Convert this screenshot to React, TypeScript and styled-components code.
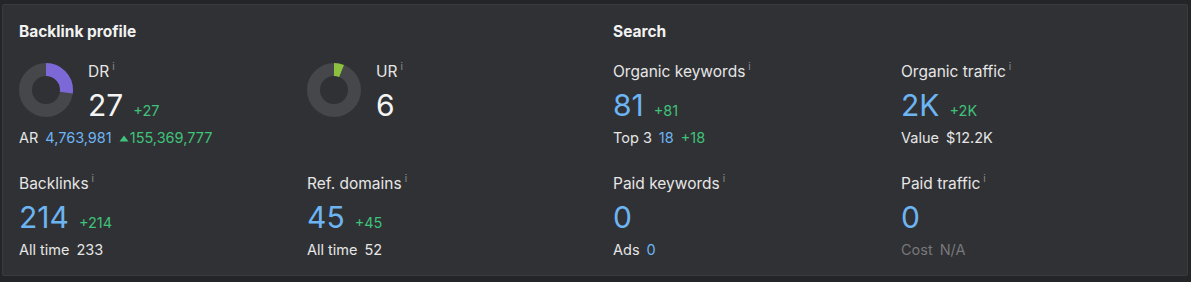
import styled, { createGlobalStyle } from "styled-components";

const Global = createGlobalStyle`
  html, body {
    margin: 0;
    background: #242528;
  }
  body {
    padding: 4px 3px 4px 2px;
    font-family: Inter, "Liberation Sans", sans-serif;
    color: #e6e6e6;
  }
`;

const Card = styled.div`
  display: flex;
  background: #303134;
  border: 1px solid #3a3b3e;
  border-radius: 2px;
  padding: 18px 0 17px;
  height: 272px;
  box-sizing: border-box;
`;

const Section = styled.div<{ $right?: boolean }>`
  flex: ${({ $right }) => ($right ? "1" : "0 0 591px")};
  padding-left: ${({ $right }) => ($right ? "18px" : "16px")};
  box-sizing: border-box;
`;

const Divider = styled.div`
  width: 1px;
  background: #46474a;
`;

const Title = styled.div`
  font-size: 15.5px;
  font-weight: 700;
  line-height: 18px;
  color: #f2f2f2;
`;

const Grid = styled.div`
  display: grid;
  grid-template-columns: 288px 288px;
  row-gap: 26px;
  margin-top: 21px;
`;

const Block = styled.div`
  display: flex;
  flex-direction: column;
`;

const GaugeRow = styled.div`
  display: flex;
  gap: 15px;
  align-items: flex-start;
`;

const GaugeBox = styled.svg`
  margin-top: 1px;
  flex: none;
`;

const Label = styled.div`
  font-size: 15.5px;
  line-height: 20px;
  color: #e6e6e6;
`;

const Info = styled.span`
  font-size: 10px;
  color: #8b8c8f;
  margin-left: 3px;
  position: relative;
  top: -7px;
`;

const ValueRow = styled.div`
  display: flex;
  align-items: baseline;
  gap: 10px;
  margin-top: 4px;
  height: 36px;
`;

const Value = styled.span<{ $white?: boolean }>`
  font-size: 30px;
  line-height: 36px;
  font-weight: 400;
  color: ${({ $white }) => ($white ? "#f4f4f4" : "#6db4f3")};
`;

const Delta = styled.span`
  font-size: 14.5px;
  color: #3fc27a;
`;

const Sub = styled.div`
  display: flex;
  align-items: center;
  gap: 7px;
  margin-top: 5px;
  font-size: 14.5px;
  line-height: 20px;
  color: #e6e6e6;
`;

const Blue = styled.span`
  color: #6db4f3;
`;

const Green = styled.span`
  color: #3fc27a;
  display: inline-flex;
  align-items: center;
`;

const Muted = styled.span`
  display: flex;
  gap: 7px;
  color: #77787b;
`;

type Metric = {
  label: string;
  value: string;
  delta?: string;
  gauge?: { pct: number; color: string };
  sub?: React.ReactNode;
};

function Gauge({ pct, color }: { pct: number; color: string }) {
  const r = 20.5;
  const c = 2 * Math.PI * r;
  return (
    <GaugeBox width="54" height="54" viewBox="0 0 54 54">
      <circle cx="27" cy="27" r={r} fill="none" stroke="#46474a" strokeWidth="13" />
      <circle
        cx="27"
        cy="27"
        r={r}
        fill="none"
        stroke={color}
        strokeWidth="13"
        strokeDasharray={`${(c * pct) / 100} ${c}`}
        transform="rotate(-90 27 27)"
      />
    </GaugeBox>
  );
}

function Up() {
  return (
    <svg width="10" height="7" viewBox="0 0 10 7" style={{ marginRight: 1 }}>
      <path d="M5 0.5 L9.5 6.5 L0.5 6.5 Z" fill="#3fc27a" />
    </svg>
  );
}

function MetricBlock({ m }: { m: Metric }) {
  const head = (
    <div>
      <Label>
        {m.label}
        <Info>i</Info>
      </Label>
      <ValueRow>
        <Value $white={!!m.gauge}>{m.value}</Value>
        {m.delta && <Delta>{m.delta}</Delta>}
      </ValueRow>
    </div>
  );
  return (
    <Block>
      {m.gauge ? (
        <GaugeRow>
          <Gauge pct={m.gauge.pct} color={m.gauge.color} />
          {head}
        </GaugeRow>
      ) : (
        head
      )}
      {m.sub && <Sub>{m.sub}</Sub>}
    </Block>
  );
}

const backlinks: Metric[] = [
  {
    label: "DR",
    value: "27",
    delta: "+27",
    gauge: { pct: 27, color: "#7d68d8" },
    sub: (
      <>
        AR <Blue>4,763,981</Blue>
        <Green>
          <Up />
          155,369,777
        </Green>
      </>
    ),
  },
  { label: "UR", value: "6", gauge: { pct: 6, color: "#8cc13f" } },
  {
    label: "Backlinks",
    value: "214",
    delta: "+214",
    sub: (
      <>
        All time <span>233</span>
      </>
    ),
  },
  {
    label: "Ref. domains",
    value: "45",
    delta: "+45",
    sub: (
      <>
        All time <span>52</span>
      </>
    ),
  },
];

const search: Metric[] = [
  {
    label: "Organic keywords",
    value: "81",
    delta: "+81",
    sub: (
      <>
        Top 3 <Blue>18</Blue>
        <Green>+18</Green>
      </>
    ),
  },
  {
    label: "Organic traffic",
    value: "2K",
    delta: "+2K",
    sub: (
      <>
        Value <span>$12.2K</span>
      </>
    ),
  },
  {
    label: "Paid keywords",
    value: "0",
    sub: (
      <>
        Ads <Blue>0</Blue>
      </>
    ),
  },
  {
    label: "Paid traffic",
    value: "0",
    sub: (
      <Muted>
        Cost <span>N/A</span>
      </Muted>
    ),
  },
];

export default function App() {
  return (
    <>
      <Global />
      <Card>
        <Section>
          <Title>Backlink profile</Title>
          <Grid>
            {backlinks.map((m) => (
              <MetricBlock key={m.label} m={m} />
            ))}
          </Grid>
        </Section>
        <Divider />
        <Section $right>
          <Title>Search</Title>
          <Grid>
            {search.map((m) => (
              <MetricBlock key={m.label} m={m} />
            ))}
          </Grid>
        </Section>
      </Card>
    </>
  );
}
